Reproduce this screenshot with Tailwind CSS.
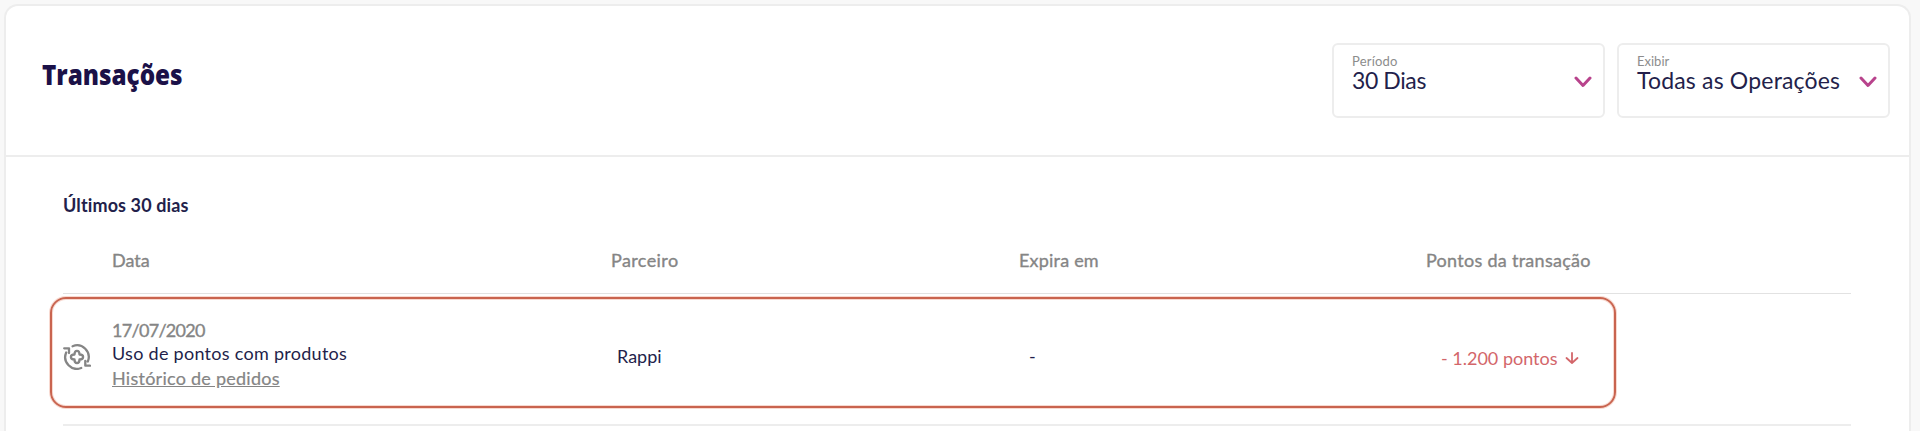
<!DOCTYPE html>
<html lang="pt-BR">
<head>
<meta charset="utf-8">
<title>Transações</title>
<script src="https://cdn.jsdelivr.net/npm/@tailwindcss/browser@4"></script>
</head>
<body class="h-[431px] overflow-hidden bg-[#f8f8f8] pl-1 pt-1 font-['Lato',sans-serif] text-[18px] leading-6 text-[#231f4b]">
<main class="h-[427px] w-[1907px] rounded-t-[14px] border-2 border-b-0 border-[#ededed] bg-white">
  <header class="flex h-[151px] items-start justify-between border-b-2 border-[#ededed] pl-9 pr-[19px] pt-[37px]">
    <h1 class="origin-left scale-x-[.865] pt-[13px] font-['Open_Sans',sans-serif] text-[28px] font-extrabold leading-9 text-[#1b1148]">Transações</h1>
    <div class="flex gap-3">
      <div class="flex h-[75px] w-[273px] items-start justify-between rounded-md border-2 border-[#ededed] pl-[18px] pr-[11px] pt-[9px]">
        <div>
          <div class="text-[13px] leading-[15px] tracking-[.2px] text-[#8c8c8c]">Período</div>
          <div class="text-[23px] leading-[23px] tracking-[-.4px]">30 Dias</div>
        </div>
        <svg class="mt-[22px] h-3 w-[18px]" viewBox="0 0 18 12" fill="none" stroke="#b8438c" stroke-width="3" stroke-linecap="round" stroke-linejoin="round"><path d="M2 2l7 7.500L16 2"/></svg>
      </div>
      <div class="flex h-[75px] w-[273px] items-start justify-between rounded-md border-2 border-[#ededed] pl-[18px] pr-[11px] pt-[9px]">
        <div>
          <div class="text-[13px] leading-[15px] text-[#8c8c8c]">Exibir</div>
          <div class="text-[23px] leading-[23px] tracking-[.18px]">Todas as Operações</div>
        </div>
        <svg class="mt-[22px] h-3 w-[18px]" viewBox="0 0 18 12" fill="none" stroke="#b8438c" stroke-width="3" stroke-linecap="round" stroke-linejoin="round"><path d="M2 2l7 7.500L16 2"/></svg>
      </div>
    </div>
  </header>
  <section class="ml-[57px] w-[1788px] pt-9">
    <h2 class="font-bold tracking-[.12px]">Últimos 30 dias</h2>
    <div class="mt-[31px] flex h-[46px] border-b border-[#e2e2e2] pl-[49px] text-[#858585] [-webkit-text-stroke:.35px_#858585]">
      <div class="w-[499px]">Data</div>
      <div class="w-[408px] tracking-[.4px]">Parceiro</div>
      <div class="w-[407px] tracking-[.2px]">Expira em</div>
      <div class="tracking-[.28px]">Pontos da transação</div>
    </div>
    <div class="h-[132px] border-b-2 border-[#ededed] pt-[3px]">
      <div class="-ml-[13px] flex h-[111px] w-[1566px] rounded-[16px] border-2 border-[#c9644f] pl-[11px] shadow-[0_0_0_1px_#f8d9d0,inset_0_0_0_1px_#f8d9d0]">
        <svg class="mt-[45px] h-[26px] w-7" viewBox="0 0 28 26" fill="none" stroke="#858585" stroke-width="2.300" stroke-linecap="round" stroke-linejoin="round"><path d="M1.200 4.300H6V9M3.200 8.500A11.700 11.700 0 0 0 18.200 24M9.600 2.200A11.700 11.700 0 0 1 24.800 17.500M22.300 16.800V21.700H27"/><path d="M11.500 10.500C11.500 8 12.500 6.900 14 6.900S16.500 8 16.500 10.500C19 10.500 20.100 11.500 20.100 13S19 15.500 16.500 15.500C16.500 18 15.500 19.100 14 19.100S11.500 18 11.500 15.500C9 15.500 7.900 14.500 7.900 13S9 10.500 11.500 10.500Z"/></svg>
        <div class="ml-[21px] w-[505px] pt-[19px]">
          <div class="tracking-[-.7px] text-[#858585] [-webkit-text-stroke:.35px_#858585]">17/07/2020</div>
          <div class="leading-[22px] tracking-[.28px]">Uso de pontos com produtos</div>
          <a class="mt-0.5 block tracking-[.25px] text-[#858585] underline [-webkit-text-stroke:.2px_#858585]">Histórico de pedidos</a>
        </div>
        <div class="w-[412px] pt-[45px]">Rappi</div>
        <div class="w-[412px] pt-[45px]">-</div>
        <div class="flex pt-[47px] text-[#d3666a]">- 1.200 pontos
          <svg class="ml-[7px] mt-[6px] h-3 w-[14px]" viewBox="0 0 14 12" fill="none" stroke="#d3666a" stroke-width="1.800" stroke-linecap="round" stroke-linejoin="round"><path d="M7 1v10M1.500 6L7 11l5.500-5"/></svg></div>
      </div>
    </div>
  </section>
</main>
</body>
</html>
